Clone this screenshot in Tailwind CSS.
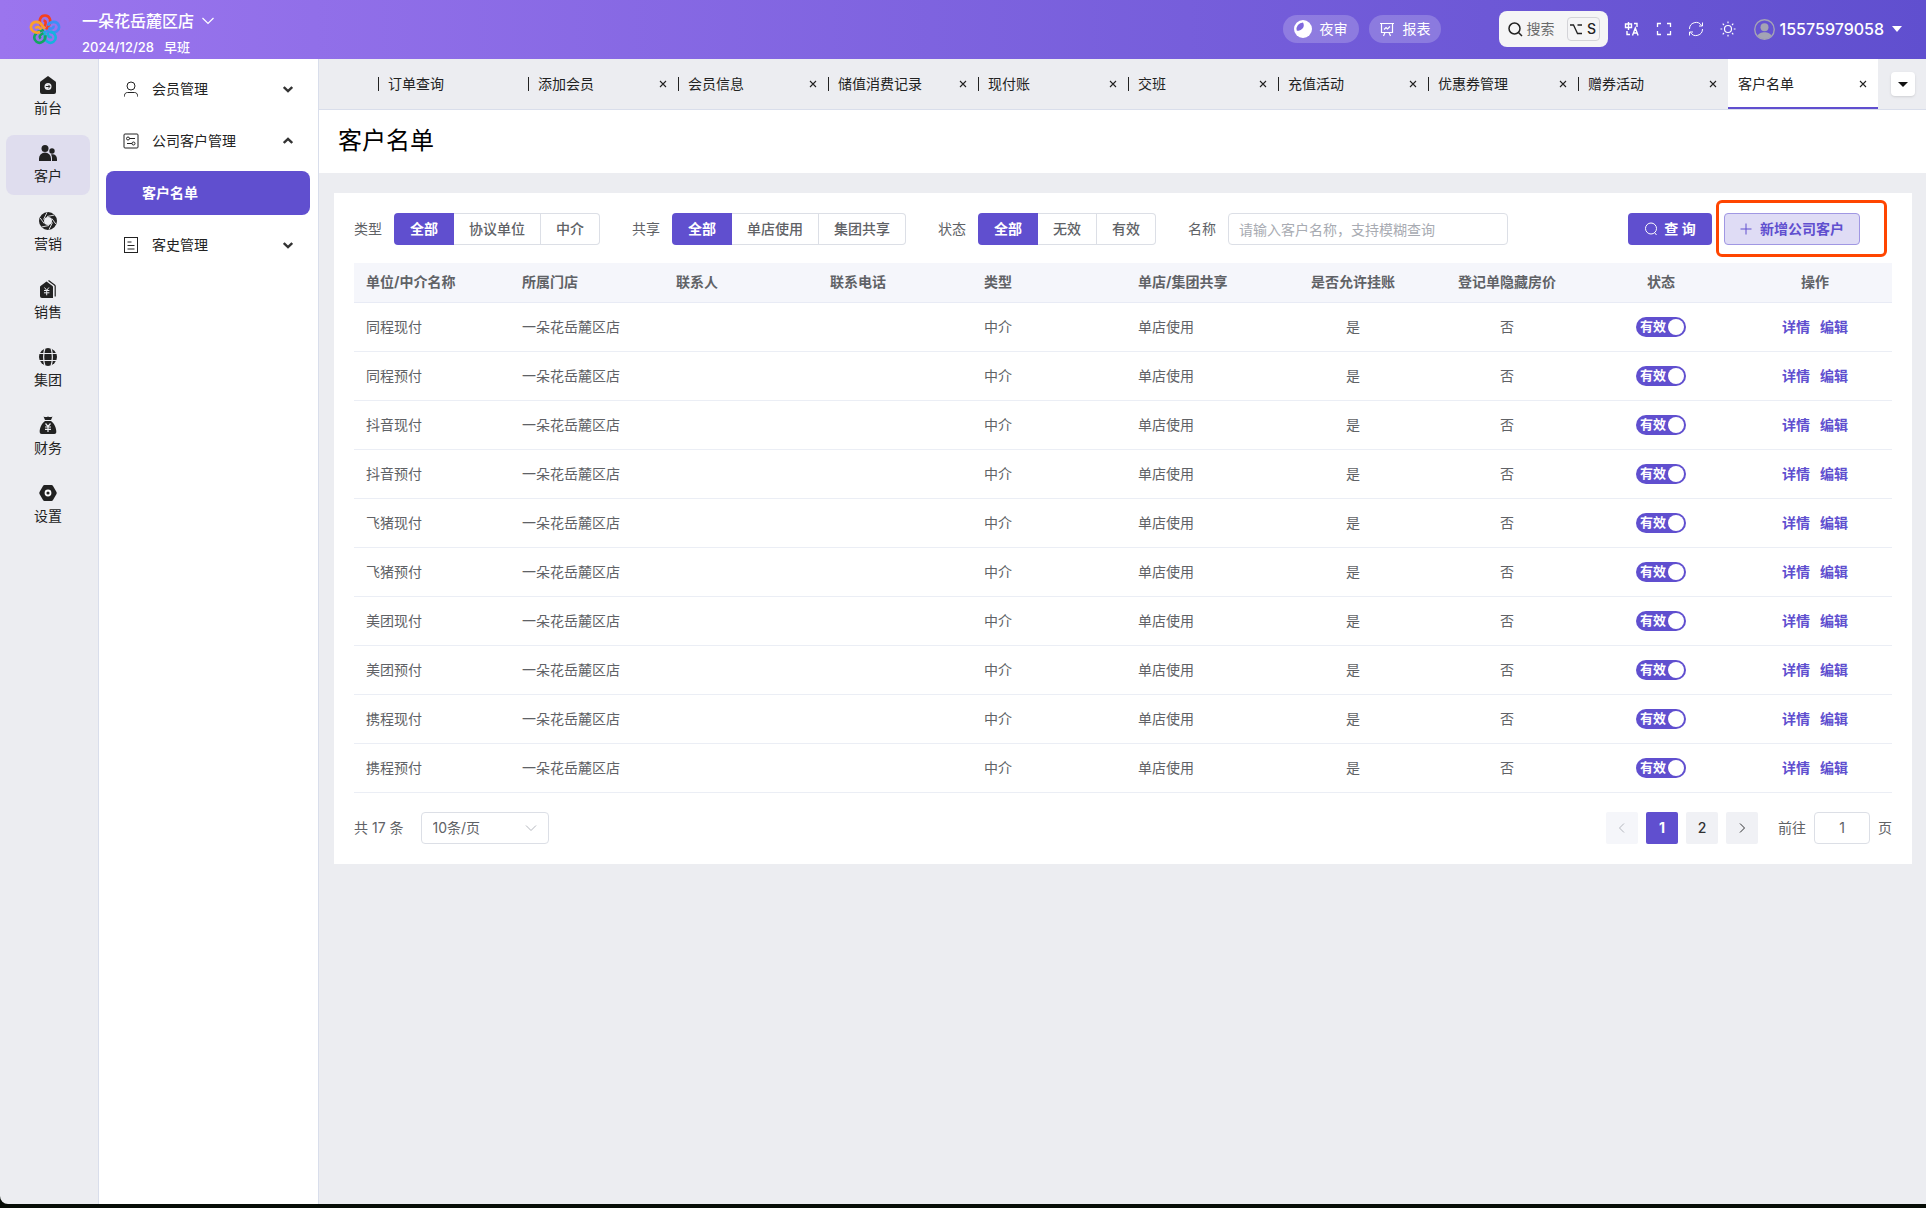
<!DOCTYPE html>
<html lang="zh-CN">
<head>
  <meta charset="UTF-8" />
  <meta name="viewport" content="width=device-width, initial-scale=1.0" />
  <title>客户名单</title>
  <script src="https://cdn.jsdelivr.net/npm/@tailwindcss/browser@4"></script>
</head>
<body class="bg-[#060c06] font-['Inter','Noto_Sans_CJK_SC',sans-serif] text-sm text-[#606266]">

<div class="flex flex-col h-screen pb-1">
  <div class="flex flex-col flex-1 min-h-0 overflow-hidden rounded-bl-lg bg-[#ecedf1]">

    <!-- Top bar -->
    <header class="flex items-center shrink-0 h-[59px] pl-[29px] pr-6 pb-px text-white bg-gradient-to-r from-[#9b75ee] to-[#604fcf]">
      <svg class="w-8 h-8 mr-[21px]" viewBox="0 0 32 32" fill="none" stroke-width="2.600">
        <path d="M12.500 13C9 8.500 11 2.500 16 2.500s7 6 3.500 10.500L17 16.500M14.500 7.500c3 .500 2.500 3 1 6" stroke="#f5401f" />
        <path d="M12.500 13C9 8.500 11 2.500 16 2.500s7 6 3.500 10.500L17 16.500M14.500 7.500c3 .500 2.500 3 1 6" stroke="#3d8ff5" transform="rotate(72 16 17)" />
        <path d="M12.500 13C9 8.500 11 2.500 16 2.500s7 6 3.500 10.500L17 16.500M14.500 7.500c3 .500 2.500 3 1 6" stroke="#17b3dd" transform="rotate(144 16 17)" />
        <path d="M12.500 13C9 8.500 11 2.500 16 2.500s7 6 3.500 10.500L17 16.500M14.500 7.500c3 .500 2.500 3 1 6" stroke="#12a562" transform="rotate(216 16 17)" />
        <path d="M12.500 13C9 8.500 11 2.500 16 2.500s7 6 3.500 10.500L17 16.500M14.500 7.500c3 .500 2.500 3 1 6" stroke="#fba02c" transform="rotate(288 16 17)" />
      </svg>
      <div class="pt-[7px]">
        <button class="flex items-center gap-2 h-6 text-base font-medium">
          一朵花岳麓区店
          <svg class="w-3 h-3" viewBox="0 0 12 12" fill="none" stroke="currentColor" stroke-width="1.200"><path d="M.500 3L6 8.500 11.500 3" /></svg>
        </button>
        <p class="flex gap-[10px] mt-1 text-[13px] leading-5 font-medium"><span>2024/12/28</span><span>早班</span></p>
      </div>

      <div class="flex items-center ml-auto">
        <button class="flex items-center gap-2 h-7 px-[11px] rounded-full bg-white/20">
          <svg class="w-[18px] h-[18px]" viewBox="0 0 18 18"><circle cx="9" cy="9" r="9" fill="#fff" /><path d="M9 2.500a6.500 6.500 0 0 0-6.300 8A5.500 5.500 0 0 0 9 2.500z" fill="#7f68dd" /></svg>
          夜审
        </button>
        <button class="flex items-center gap-2 h-7 ml-[10px] px-[10px] rounded-full bg-white/20">
          <svg class="w-4 h-4" viewBox="0 0 16 16" fill="none" stroke="currentColor" stroke-width="1.200"><path d="M1 2.500h14M2.500 2.500v9h11v-9M6 11.500L4.500 15M10 11.500l1.500 3.500M5 8.500l2-2 1.500 1.500L11 5.500" /></svg>
          报表
        </button>
        <button class="flex items-center h-9 ml-[58px] px-2 rounded-lg bg-[#f5f5f6]">
          <svg class="w-4 h-4 mr-1 text-[#222]" viewBox="0 0 16 16" fill="none" stroke="currentColor" stroke-width="1.500"><circle cx="7.500" cy="7.500" r="5.500" /><path d="M11.500 11.500L15 15" /></svg>
          <span class="text-[#6b6b6b]">搜索</span>
          <kbd class="flex items-center justify-center gap-[5px] w-[33px] h-6 ml-3 rounded border border-[#d4d4d8] font-['Inter',sans-serif] font-medium text-[#222]">
            <svg class="w-3 h-3" viewBox="0 0 12 12" fill="none" stroke="currentColor" stroke-width="1.300"><path d="M0 2h3.500l4 8.500H12M7.500 2H12" /></svg>S
          </kbd>
        </button>
        <button class="ml-4" aria-label="语言">
          <svg class="w-4 h-4" viewBox="0 0 16 16" fill="none" stroke="currentColor" stroke-width="1.400"><path d="M1.500 3h6v3.500h-6zM4.500 1v8M10 2.500h3V6M3 10v3.500h3M8.500 14.500l2.800-7.500 2.800 7.500M9.500 12h3.600" /></svg>
        </button>
        <button class="ml-4" aria-label="全屏">
          <svg class="w-4 h-4" viewBox="0 0 16 16" fill="none" stroke="currentColor" stroke-width="1.300"><path d="M1.500 6V2.500H5M11 2.500h3.500V6M14.500 10v3.500H11M5 13.500H1.500V10" /></svg>
        </button>
        <button class="ml-4" aria-label="刷新">
          <svg class="w-4 h-4" viewBox="0 0 16 16" fill="none" stroke="currentColor"><path d="M1.500 8a6.500 6.500 0 0 1 12-3.500M14.500 1.500v3.500h-3.500M14.500 8a6.500 6.500 0 0 1-12 3.500M1.500 14.500V11H5" /></svg>
        </button>
        <button class="ml-4" aria-label="主题">
          <svg class="w-4 h-4" viewBox="0 0 16 16" fill="none" stroke="currentColor" stroke-width="1.200"><circle cx="8" cy="8" r="3.500" /><path d="M8 .500v1.800M8 13.700v1.800M.500 8h1.800M13.700 8h1.800M2.700 2.700L4 4M12 12l1.300 1.300M2.700 13.300L4 12M12 4l1.300-1.300" /></svg>
        </button>
        <button class="flex items-center ml-[18px] text-base font-medium">
          <svg class="w-[21px] h-[21px] mr-[5px]" viewBox="0 0 20 20"><circle cx="10" cy="10" r="9.300" fill="none" stroke="#a4a4b4" stroke-width="1.300" /><circle cx="10" cy="7.800" r="3.800" fill="#a4a4b4" /><path d="M3.500 16c1-4.500 12-4.500 13 0-3 4-10 4-13 0z" fill="#a4a4b4" /></svg>
          15575979058
          <svg class="w-[10px] h-[6px] ml-2" viewBox="0 0 10 6"><path d="M0 0h10L5 6z" fill="currentColor" /></svg>
        </button>
      </div>
    </header>

    <div class="flex flex-1 min-h-0">

      <!-- Main navigation -->
      <nav class="flex flex-col gap-2 shrink-0 w-[99px] pt-2 pl-[6px] pr-2 border-r border-[#d9deeb] text-[#222]">
        <a href="#" class="flex flex-col items-center h-[60px] pt-[9px] rounded-lg">
          <svg class="w-[18px] h-[18px]" viewBox="0 0 18 18" fill="currentColor"><path d="M9 0l7.500 5.500c.400.300.500.600.500 1V16a2 2 0 0 1-2 2H3a2 2 0 0 1-2-2V6.500c0-.400.100-.700.500-1z" /><circle cx="9" cy="10.500" r="3.500" fill="#ecedf1" /><path d="M6.800 10.500h4M9.300 8.800l1.700 1.700-1.700 1.700" fill="none" stroke="#222" /></svg>
          <span class="mt-1 leading-5">前台</span>
        </a>
        <a href="#" class="flex flex-col items-center h-[60px] pt-[9px] rounded-lg bg-[#dfddee]">
          <svg class="w-[18px] h-[18px]" viewBox="0 0 18 18" fill="currentColor"><circle cx="6" cy="4.500" r="3.500" /><circle cx="13" cy="7" r="2.700" /><path d="M0 17v-2.500a6 6 0 0 1 12 0V17zM13 17v-3c0-1.300-.400-2.400-1-3.400 3-1 6 .900 6 4.400v2z" /></svg>
          <span class="mt-1 leading-5">客户</span>
        </a>
        <a href="#" class="flex flex-col items-center h-[60px] pt-[9px] rounded-lg">
          <svg class="w-[18px] h-[18px]" viewBox="0 0 18 18" fill="none"><circle cx="9" cy="9" r="6.500" stroke="#222" stroke-width="5" /><path d="M4.500 7.500L8 .500M8 4.500l7.500-1.500M12.800 6.500l4 5.500M13.500 10.500L10 17.500M10 13.500l-7.500 1.500M5.200 11.500L1.200 6" stroke="#ecedf1" stroke-width=".900" /></svg>
          <span class="mt-1 leading-5">营销</span>
        </a>
        <a href="#" class="flex flex-col items-center h-[60px] pt-[9px] rounded-lg">
          <svg class="w-[18px] h-[18px]" viewBox="0 0 18 18" fill="currentColor"><path d="M7.500 1.500l6 4.500c.400.300.500.600.500 1v11H3a2 2 0 0 1-2-2V7c0-.400.100-.700.500-1z" /><path d="M9.500.500L15.500 5c.500.400.700.800.700 1.300V16.500" fill="none" stroke="currentColor" stroke-width="1.200" /><path d="M5.500 7.500l2.200 2.800 2.200-2.800M5 10.500h5.400M5 12.800h5.400M7.700 10.300v5" fill="none" stroke="#ecedf1" /></svg>
          <span class="mt-1 leading-5">销售</span>
        </a>
        <a href="#" class="flex flex-col items-center h-[60px] pt-[9px] rounded-lg">
          <svg class="w-[18px] h-[18px]" viewBox="0 0 18 18" fill="none"><circle cx="9" cy="9" r="9" fill="#222" /><path d="M0 5.500h18M0 12.500h18M6 0c-1.800 5-1.800 13 0 18M12 0c1.800 5 1.800 13 0 18" stroke="#ecedf1" stroke-width="1.200" /></svg>
          <span class="mt-1 leading-5">集团</span>
        </a>
        <a href="#" class="flex flex-col items-center h-[60px] pt-[9px] rounded-lg">
          <svg class="w-[18px] h-[18px]" viewBox="0 0 18 18" fill="currentColor"><path d="M4.500.500c1.500.800 3 .800 4.500 0 1.500.800 3 .800 4.500 0L12 4H6zM6 5h6c3 2 5.500 7 5.300 11 0 1.200-.800 2-2 2H2.700c-1.200 0-2-.800-2-2C.500 12 3 7 6 5z" /><path d="M6.500 7.500L9 10.500l2.500-3M6 11h6M6 13.300h6M9 10.500v5.500" fill="none" stroke="#ecedf1" stroke-width="1.200" /></svg>
          <span class="mt-1 leading-5">财务</span>
        </a>
        <a href="#" class="flex flex-col items-center h-[60px] pt-[9px] rounded-lg">
          <svg class="w-[18px] h-[18px]" viewBox="0 0 18 18"><path d="M5.500 1h7c.700 0 1.200.300 1.500.900l3.500 6.200c.300.600.300 1.200 0 1.800L14 16.100c-.300.600-.800.900-1.500.900h-7c-.700 0-1.200-.300-1.500-.900L.500 9.900c-.300-.600-.300-1.200 0-1.800L4 1.900c.300-.600.800-.900 1.500-.900z" fill="#222" /><circle cx="9" cy="9" r="2.500" fill="none" stroke="#fff" stroke-width="1.800" /></svg>
          <span class="mt-1 leading-5">设置</span>
        </a>
      </nav>

      <!-- Section navigation -->
      <nav class="flex flex-col gap-2 shrink-0 w-[220px] pt-2 pl-[7px] pr-2 border-r border-[#d9deeb] bg-white text-[#222]">
        <button class="flex items-center h-11 px-[17px]">
          <svg class="w-4 h-4 mr-[13px]" viewBox="0 0 16 16" fill="none" stroke="currentColor"><circle cx="8" cy="5" r="4" /><path d="M1.500 15.500v-1c0-2 1.500-3 3-3h7c1.500 0 3 1 3 3v1" /></svg>
          会员管理
          <svg class="w-[10px] h-[10px] ml-auto" viewBox="0 0 10 10" fill="none" stroke="#333" stroke-width="2.400"><path d="M.800 3L5 7l4.200-4" /></svg>
        </button>
        <button class="flex items-center h-11 px-[17px]">
          <svg class="w-4 h-4 mr-[13px]" viewBox="0 0 16 16" fill="none" stroke="currentColor"><rect x="1" y="1" width="14" height="14" rx="1" /><circle cx="5" cy="5.500" r="1.500" /><path d="M6.500 5.500H12M4 10.500h5" /><circle cx="10.500" cy="10.500" r="1.500" /></svg>
          公司客户管理
          <svg class="w-[10px] h-[10px] ml-auto" viewBox="0 0 10 10" fill="none" stroke="#333" stroke-width="2.400"><path d="M.800 7L5 3l4.200 4" /></svg>
        </button>
        <a href="#" class="flex items-center h-11 pl-9 rounded-lg bg-[#604fcf] text-white font-bold">客户名单</a>
        <button class="flex items-center h-11 px-[17px]">
          <svg class="w-4 h-4 mr-[13px]" viewBox="0 0 16 16" fill="none" stroke="currentColor"><rect x="1.500" y=".500" width="13" height="15" /><path d="M4.500 5h4M4.500 8.500h7M4.500 12h7" /></svg>
          客史管理
          <svg class="w-[10px] h-[10px] ml-auto" viewBox="0 0 10 10" fill="none" stroke="#333" stroke-width="2.400"><path d="M.800 3L5 7l4.200-4" /></svg>
        </button>
      </nav>

      <main class="flex-1 min-w-0">

        <!-- Open tabs -->
        <div class="flex items-center h-[51px] pr-[11px] border-b border-[#d9deeb] text-[#222]">
          <div id="tabs" class="flex justify-end flex-1 h-full"></div>
          <button class="flex items-center justify-center w-6 h-6 ml-[13px] rounded bg-white shadow-sm" aria-label="更多">
            <svg class="w-[10px] h-[5px]" viewBox="0 0 10 5"><path d="M0 0h10L5 5z" fill="#111" /></svg>
          </button>
        </div>

        <h1 class="flex items-center h-[63px] px-[19px] pb-[2px] bg-white text-2xl text-black">客户名单</h1>

        <section class="mt-5 ml-[15px] mr-[14px] p-5 bg-white">

          <!-- Filters -->
          <form class="flex items-center" onsubmit="return false">
            <fieldset class="flex items-center mr-8">
              <legend class="float-left mr-3">类型</legend>
              <div class="flex h-8 font-medium">
                <label class="flex items-center px-4 rounded-l bg-[#604fcf] text-white font-bold"><input type="radio" name="type" class="sr-only" checked />全部</label>
                <label class="flex items-center px-[15px] border-y border-r border-[#dcdfe6]"><input type="radio" name="type" class="sr-only" />协议单位</label>
                <label class="flex items-center px-[15px] rounded-r border-y border-r border-[#dcdfe6]"><input type="radio" name="type" class="sr-only" />中介</label>
              </div>
            </fieldset>
            <fieldset class="flex items-center mr-8">
              <legend class="float-left mr-3">共享</legend>
              <div class="flex h-8 font-medium">
                <label class="flex items-center px-4 rounded-l bg-[#604fcf] text-white font-bold"><input type="radio" name="share" class="sr-only" checked />全部</label>
                <label class="flex items-center px-[15px] border-y border-r border-[#dcdfe6]"><input type="radio" name="share" class="sr-only" />单店使用</label>
                <label class="flex items-center px-[15px] rounded-r border-y border-r border-[#dcdfe6]"><input type="radio" name="share" class="sr-only" />集团共享</label>
              </div>
            </fieldset>
            <fieldset class="flex items-center mr-8">
              <legend class="float-left mr-3">状态</legend>
              <div class="flex h-8 font-medium">
                <label class="flex items-center px-4 rounded-l bg-[#604fcf] text-white font-bold"><input type="radio" name="status" class="sr-only" checked />全部</label>
                <label class="flex items-center px-[15px] border-y border-r border-[#dcdfe6]"><input type="radio" name="status" class="sr-only" />无效</label>
                <label class="flex items-center px-[15px] rounded-r border-y border-r border-[#dcdfe6]"><input type="radio" name="status" class="sr-only" />有效</label>
              </div>
            </fieldset>
            <label for="name" class="mr-3">名称</label>
            <input id="name" type="text" placeholder="请输入客户名称，支持模糊查询" class="w-[280px] h-8 px-[10px] rounded border border-[#dcdfe6] placeholder:text-[#a8abb2]" />
            <button class="flex items-center justify-center gap-[6px] w-[84px] h-8 ml-auto rounded bg-[#604fcf] text-white font-bold">
              <svg class="w-[14px] h-[14px]" viewBox="0 0 14 14" fill="none" stroke="currentColor"><circle cx="7" cy="6.500" r="5.500" /><path d="M10.500 10.500l2 2.500" /></svg>
              查 询
            </button>
            <div class="relative ml-3 mr-8">
              <button type="button" class="flex items-center justify-center gap-2 w-[136px] h-8 rounded border border-[#a097e3] bg-[#dfdcf5] text-[#604fcf] font-bold">
                <svg class="w-3 h-3" viewBox="0 0 12 12" fill="none" stroke="currentColor"><path d="M6 .500v11M.500 6h11" /></svg>
                新增公司客户
              </button>
              <div class="absolute -top-[13px] -left-2 -right-[27px] -bottom-3 rounded-md border-[3px] border-[#ff4500] pointer-events-none"></div>
            </div>
          </form>

          <table class="w-full mt-[18px] table-fixed text-left">
            <thead class="bg-[#f5f6fb] border-b border-[#e8ebf5]">
              <tr class="h-[39px]">
                <th class="w-[152px] px-3 font-bold">单位/中介名称</th>
                <th class="px-4 font-bold">所属门店</th>
                <th class="px-4 font-bold">联系人</th>
                <th class="px-4 font-bold">联系电话</th>
                <th class="px-4 font-bold">类型</th>
                <th class="px-4 font-bold">单店/集团共享</th>
                <th class="px-4 font-bold text-center">是否允许挂账</th>
                <th class="px-4 font-bold text-center">登记单隐藏房价</th>
                <th class="px-4 font-bold text-center">状态</th>
                <th class="px-4 font-bold text-center">操作</th>
              </tr>
            </thead>
            <tbody id="rows"></tbody>
          </table>

          <!-- Pagination -->
          <div class="flex items-center mt-[19px]">
            <span>共 17 条</span>
            <div class="relative ml-[17px]">
              <select aria-label="每页条数" class="appearance-none w-32 h-8 px-[11px] rounded border border-[#dcdfe6] bg-white">
                <option>10条/页</option>
                <option>20条/页</option>
              </select>
              <svg class="absolute right-3 top-[10px] w-3 h-3 pointer-events-none" viewBox="0 0 12 12" fill="none" stroke="#b4b7be"><path d="M1 3.500l5 5 5-5" /></svg>
            </div>
            <div class="flex gap-2 ml-auto font-medium text-[#303133]">
              <button class="flex items-center justify-center w-8 h-8 rounded-xs bg-[#f5f6fa]" disabled aria-label="上一页">
                <svg class="w-3 h-3" viewBox="0 0 12 12" fill="none" stroke="#b4b7be"><path d="M8 1.500L3.500 6 8 10.500" /></svg>
              </button>
              <button class="w-8 h-8 rounded-xs bg-[#604fcf] text-white font-bold">1</button>
              <button class="w-8 h-8 rounded-xs bg-[#f0f1f5]">2</button>
              <button class="flex items-center justify-center w-8 h-8 rounded-xs bg-[#f0f1f5]" aria-label="下一页">
                <svg class="w-3 h-3" viewBox="0 0 12 12" fill="none" stroke="currentColor"><path d="M4 1.500L8.500 6 4 10.500" /></svg>
              </button>
            </div>
            <label for="page" class="ml-5">前往</label>
            <input id="page" type="text" value="1" class="w-14 h-8 mx-2 rounded border border-[#dcdfe6] text-center" />
            <span>页</span>
          </div>
        </section>
      </main>
    </div>
  </div>
</div>

<script>
  const tabs = ['订单查询', '添加会员', '会员信息', '储值消费记录', '现付账', '交班', '充值活动', '优惠券管理', '赠券活动', '客户名单'];
  const names = ['同程现付', '同程预付', '抖音现付', '抖音预付', '飞猪现付', '飞猪预付', '美团现付', '美团预付', '携程现付', '携程预付'];

  const close = `<button class="ml-auto mr-[11px]" aria-label="关闭"><svg class="w-2 h-2" viewBox="0 0 8 8" fill="none" stroke="#222" stroke-width="1.100"><path d="M1 1l6 6M7 1L1 7" /></svg></button>`;

  document.getElementById('tabs').innerHTML = tabs.map((tab, i) => {
    if (i === tabs.length - 1) {
      return `<div class="flex items-center w-[150px] h-full pt-[2px] pl-[10px] border-b-2 border-[#604fcf] bg-white"><a href="#">${tab}</a>${close}</div>`;
    }
    return `<div class="flex items-center w-[150px] h-full"><span class="w-px h-[14px] mr-[9px] bg-[#222]"></span><a href="#">${tab}</a>${i ? close : ''}</div>`;
  }).join('');

  document.getElementById('rows').innerHTML = names.map(name => `
    <tr class="h-[49px] border-b border-[#ebeef5]">
      <td class="px-3">${name}</td>
      <td class="px-4">一朵花岳麓区店</td>
      <td class="px-4"></td>
      <td class="px-4"></td>
      <td class="px-4">中介</td>
      <td class="px-4">单店使用</td>
      <td class="px-4 text-center">是</td>
      <td class="px-4 text-center">否</td>
      <td class="px-4">
        <label class="flex items-center w-[50px] h-5 mx-auto px-[2px] rounded-full bg-[#604fcf] text-white text-[13px] font-bold">
          <input type="checkbox" class="sr-only" checked /><span class="flex-1 text-center">有效</span><span class="w-4 h-4 rounded-full bg-white"></span>
        </label>
      </td>
      <td class="px-4">
        <div class="flex justify-center gap-[10px] font-bold text-[#604fcf]"><a href="#">详情</a><a href="#">编辑</a></div>
      </td>
    </tr>`).join('');
</script>
</body>
</html>
